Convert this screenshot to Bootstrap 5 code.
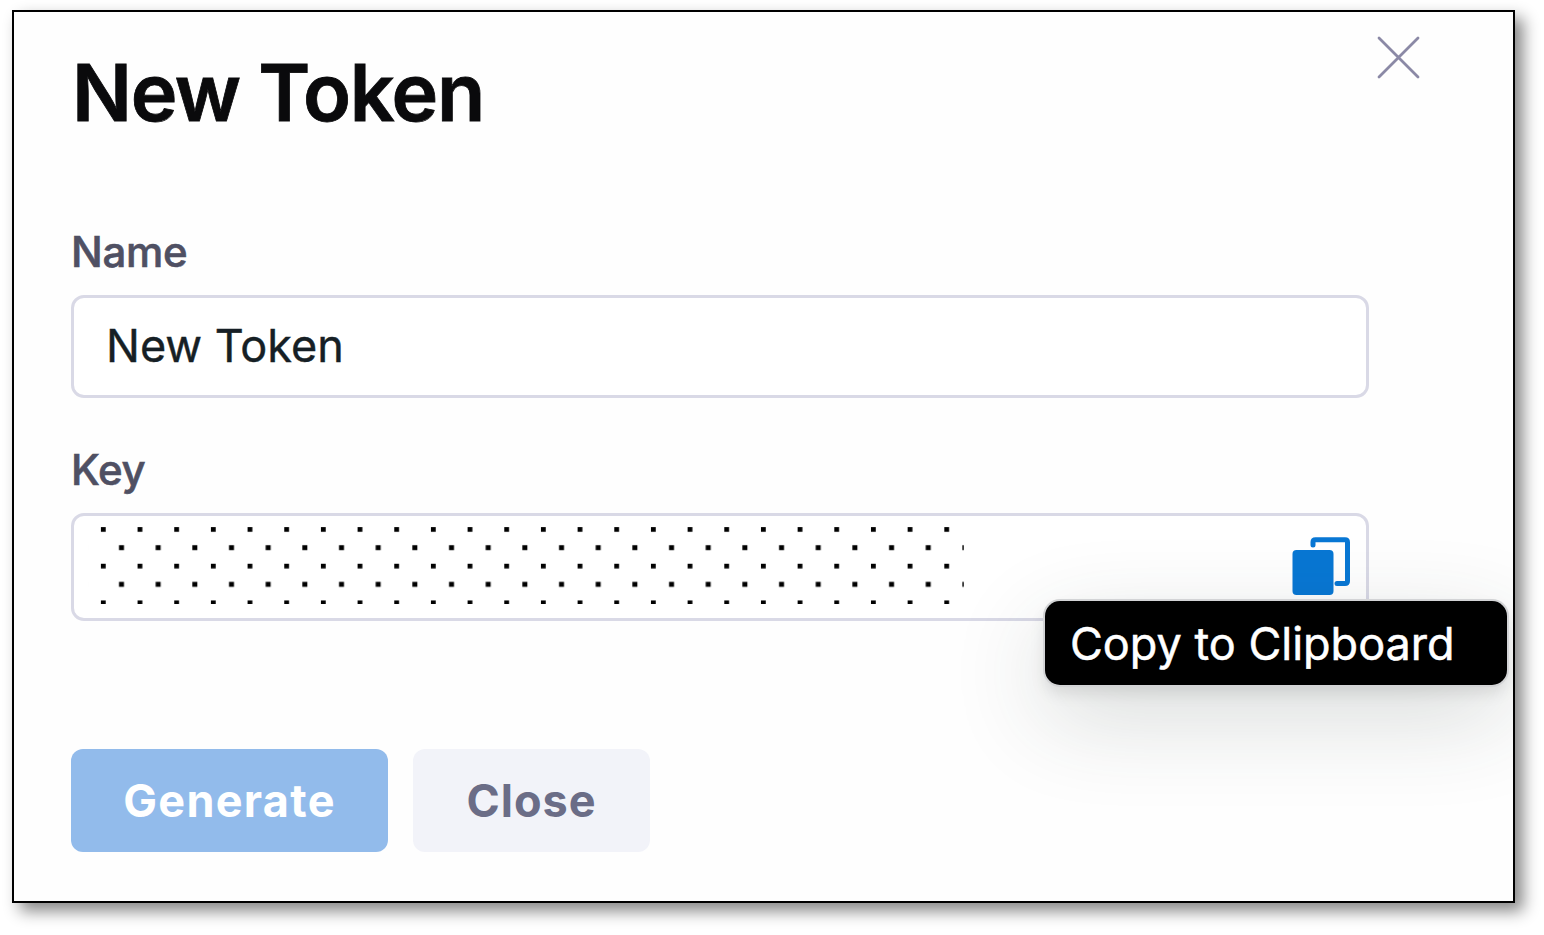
<!DOCTYPE html>
<html lang="en">
<head>
<meta charset="utf-8">
<meta name="viewport" content="width=device-width, initial-scale=1">
<title>New Token</title>
<link href="https://cdn.jsdelivr.net/npm/bootstrap@5.3.0/dist/css/bootstrap.min.css" rel="stylesheet">
<style>
  body { font-family: Inter, "Liberation Sans", sans-serif; background: #fff; overflow: hidden; height: 935px; }
  .token-panel { margin: 10px 0 0 12px; width: 1503px; height: 893px; border: 2px solid #000; background: #fefefe; padding: 0 0 0 57px; overflow: hidden; box-shadow: 8px 8px 15px rgba(0,0,0,.48); }
  .token-head { height: 215px; padding-right: 92px; }
  .token-title { font-size: 79px; line-height: 96px; font-weight: 600; color: #0a0a0c; margin: 32px 0 0 1px; letter-spacing: -1.35px; -webkit-text-stroke: .8px #0a0a0c; }
  .btn-x { width: 44px; height: 44px; margin-top: 24px; }
  .token-form { width: 1298px; }
  .form-label { display: block; font-size: 42px; line-height: 50px; font-weight: 500; letter-spacing: -.3px; color: #4f5063; margin: 0; -webkit-text-stroke: .6px #4f5063; }
  .field-box { border: 3px solid #d9d9e6; border-radius: 13px; background: #fff; }
  .field-name { height: 103px; margin-top: 18px; padding: 0 32px 2px 32px; font-size: 45px; line-height: 56px; color: #161f25; box-shadow: none; -webkit-text-stroke: .4px #161f25; }
  .key-label { margin-top: 47px !important; }
  .field-key { height: 108px; margin-top: 18px; }
  .btn-row { margin-top: 128px; gap: 25px; }
  .btn-row .btn { height: 103px; font-size: 45px; font-weight: 700; border: 0; border-radius: 12px; padding: 0; letter-spacing: 1.3px; }
  .btn-generate, .btn-generate:disabled { width: 317px; background: #92bbeb; color: #fff; opacity: 1; }
  .btn-row .btn-close-form { width: 237px; background: #f2f3f9; color: #6b6d87; letter-spacing: 1px; }
  .copy-tip { left: 971px; top: 85px; width: 462px; height: 84px; border-radius: 15px; background: #000; color: #fff; font-size: 45px; line-height: 86px; padding-left: 25px; white-space: nowrap; -webkit-text-stroke: .5px #fff;
    box-shadow: 0 0 0 2px #d3d4d6, 0 8px 16px rgba(0,0,0,.1), 0 30px 95px rgba(40,60,55,.19); }
</style>
</head>
<body>
<main class="token-panel">
  <div class="token-head d-flex justify-content-between align-items-start">
    <h1 class="token-title">New Token</h1>
    <button class="btn btn-x p-0 border-0 d-flex" aria-label="Close">
      <svg width="44" height="44" viewBox="0 0 44 44" fill="none" stroke="#8b89a6" stroke-width="2.8" stroke-linecap="round"><path d="M2 2 41 41M41 2 2 41"/></svg>
    </button>
  </div>
  <form class="token-form">
    <label class="form-label" for="name">Name</label>
    <input class="form-control field-box field-name" id="name" value="New Token">
    <label class="form-label key-label">Key</label>
    <div class="field-box field-key position-relative d-flex justify-content-between">
      <svg class="ms-2" width="890" height="102" viewBox="82 516 890 102" aria-hidden="true">
        <defs>
          <pattern id="dots" x="100.9" y="527.1" width="36.67" height="36.67" patternUnits="userSpaceOnUse">
            <path d="M0 0h4.800v4.800H0zM18.100 18.200h5v4.800h-5z"/>
          </pattern>
        </defs>
        <path fill="url(#dots)" d="M88 526.500h875.800V604H88z"/>
      </svg>
      <svg class="flex-shrink-0" width="60" height="60" viewBox="0 0 60 60" style="margin:20px 15px 0 0">
        <rect x="1.5" y="14" width="41" height="45" rx="4" fill="#0877d4"/>
        <path d="M22 9V6Q22 3.800 24.500 3.800H54Q56.500 3.800 56.500 6.300V45Q56.500 47.500 54 47.500H46" fill="none" stroke="#0877d4" stroke-width="5" stroke-linecap="round"/>
      </svg>
      <div class="copy-tip position-absolute" role="tooltip">Copy to Clipboard</div>
    </div>
    <div class="btn-row d-flex">
      <button type="button" class="btn btn-generate" disabled>Generate</button>
      <button type="button" class="btn btn-close-form">Close</button>
    </div>
  </form>
</main>
<script src="https://cdn.jsdelivr.net/npm/bootstrap@5.3.0/dist/js/bootstrap.bundle.min.js"></script>
</body>
</html>
